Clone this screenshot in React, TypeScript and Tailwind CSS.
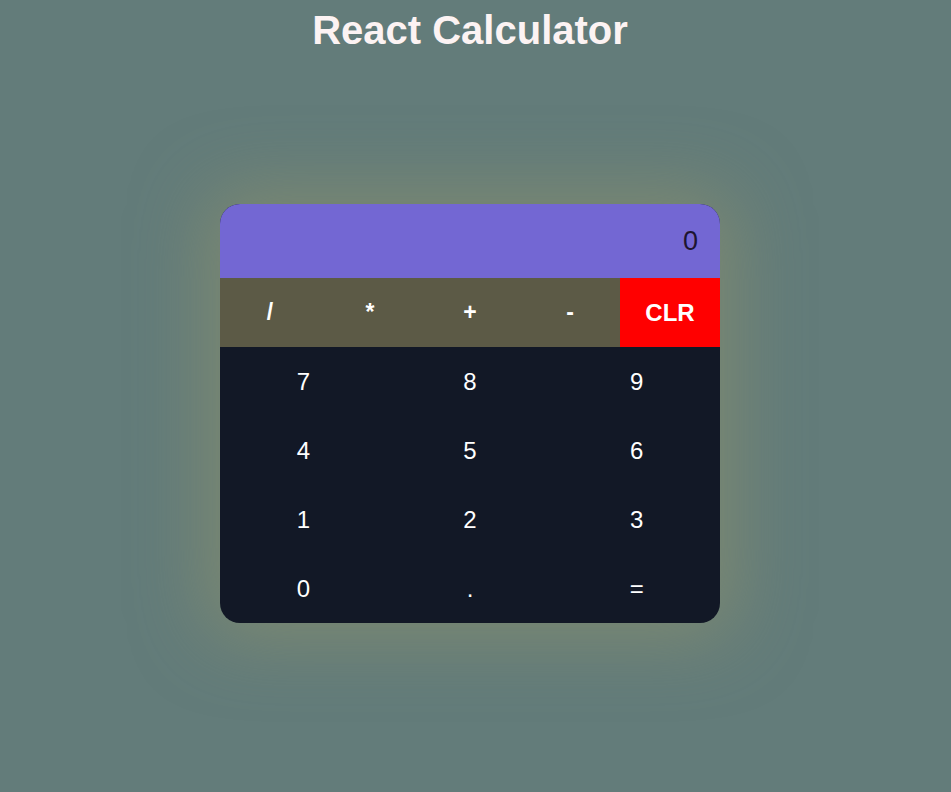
import React from "react";

export default function App() {
  const ops = ["/", "*", "+", "-"];
  const digits = ["7", "8", "9", "4", "5", "6", "1", "2", "3", "0", ".", "="];
  return (
    <div
      className="min-h-[792px] w-full bg-[#637c7a] flex flex-col items-center pr-[11px]"
      style={{ fontFamily: '"Liberation Sans", Arial, sans-serif' }}
    >
      <h1 className="text-[40px] leading-[60px] font-bold text-[#fcf3f3] m-0">React Calculator</h1>
      <div className="mt-[144px] w-[500px] rounded-[20px] overflow-hidden bg-[#121826] shadow-[0_0_70px_15px_rgba(150,150,105,0.5)]">
        <div className="h-[74px] bg-[#7367d3] flex items-center justify-end pr-[22px] text-[27px] text-[#1e1530]">
          0
        </div>
        <div className="flex h-[69px] bg-[#5c5a46]">
          {ops.map((o) => (
            <button key={o} className="w-[100px] h-full flex items-center justify-center text-white font-bold text-[23px]">
              {o}
            </button>
          ))}
          <button className="w-[100px] h-full flex items-center justify-center bg-[#ff0000] text-white font-bold text-[24px]">
            CLR
          </button>
        </div>
        <div className="grid grid-cols-3">
          {digits.map((d) => (
            <button key={d} className="h-[69px] flex items-center justify-center text-white text-[24px]">
              {d}
            </button>
          ))}
        </div>
      </div>
    </div>
  );
}
